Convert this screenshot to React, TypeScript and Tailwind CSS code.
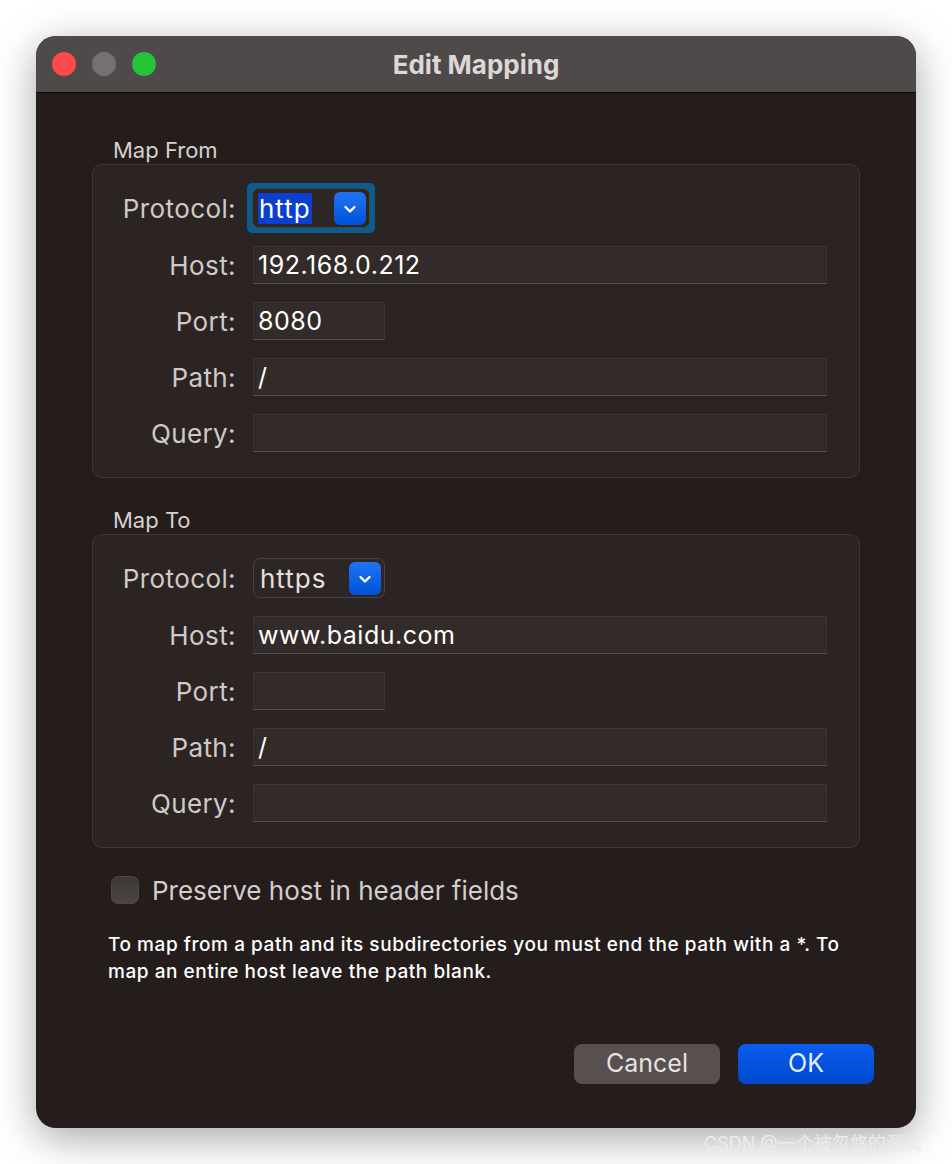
import React from "react";

const font = { fontFamily: "Inter, 'Noto Sans', 'Noto Sans CJK SC', sans-serif" };

function Chevron() {
  return (
    <svg width="16" height="16" viewBox="0 0 16 16" fill="none">
      <path d="M3.5 6L8 10.5 12.5 6" stroke="white" strokeWidth="2.4" strokeLinecap="round" strokeLinejoin="round" />
    </svg>
  );
}

function Select({ value, focused, width }: { value: string; focused?: boolean; width: string }) {
  const box = (
    <div
      className={`relative flex h-[40px] items-center rounded-[7px] border border-[#4a4241] bg-[#2e2625] pl-[5px] ${width}`}
    >
      <span
        className={`px-[1px] text-[26px] leading-[31px] tracking-[1px] ${
          focused ? "bg-[#0a3fcf] text-white" : "text-[#e4e0df]"
        }`}
      >
        {value}
      </span>
      <div className="absolute right-[3px] top-[3px] flex h-[33px] w-[32px] items-center justify-center rounded-[6px] bg-gradient-to-b from-[#1f74f2] to-[#0052d9]">
        <Chevron />
      </div>
    </div>
  );
  if (!focused) return box;
  return <div className="-m-[6px] rounded-[5px] bg-[#0c5c8c] p-[5px]">{box}</div>;
}

function Field({ value, narrow }: { value?: string; narrow?: boolean }) {
  return (
    <div
      className={`flex h-[38px] items-center border-t border-t-[#3d3534] border-b border-b-[#564e4d] border-x border-x-[#3a3231] bg-[#332b2a] px-[4px] pt-[2px] text-[25px] tracking-[0.5px] text-white ${
        narrow ? "w-[132px]" : "w-[574px]"
      }`}
    >
      {value}
    </div>
  );
}

function Row({ label, children, tall }: { label: string; children: React.ReactNode; tall?: boolean }) {
  return (
    <div className={`flex items-center ${tall ? "h-[40px]" : "h-[38px]"}`}>
      <div className="w-[143px] text-right text-[26px] tracking-[0.4px] text-[#cfcac9]">{label}</div>
      <div className="ml-[17px]">{children}</div>
    </div>
  );
}

function Group({
  title,
  proto,
  focused,
  host,
  port,
  path,
}: {
  title: string;
  proto: string;
  focused?: boolean;
  host: string;
  port: string;
  path: string;
}) {
  return (
    <div>
      <div className="ml-[21px] h-[24px] text-[22px] leading-[24px] text-[#d6d1d0]">{title}</div>
      <div className="mt-[2px] flex flex-col gap-[18px] rounded-[10px] border border-[#3e3736] bg-[#2c2423] pb-[25px] pt-[23px]">
        <Row label="Protocol:" tall>
          <Select value={proto} focused={focused} width={focused ? "w-[118px]" : "w-[132px]"} />
        </Row>
        <Row label="Host:">
          <Field value={host} />
        </Row>
        <Row label="Port:">
          <Field value={port} narrow />
        </Row>
        <Row label="Path:">
          <Field value={path} />
        </Row>
        <Row label="Query:">
          <Field />
        </Row>
      </div>
    </div>
  );
}

export default function App() {
  return (
    <div className="relative h-[1164px] w-[952px] overflow-hidden bg-white" style={font}>
      <div className="ml-[36px] mt-[36px] flex h-[1092px] w-[880px] flex-col overflow-hidden rounded-[20px] bg-[#241d1c] shadow-[0_10px_40px_rgba(0,0,0,0.35)]">
        {/* Title bar */}
        <div className="relative flex h-[57px] items-center justify-center border-b border-b-[#0c0909] bg-[#4f4a49]">
          <div className="absolute left-[16px] top-[16px] flex gap-[16px]">
            <span className="h-[24px] w-[24px] rounded-full bg-[#fe4a4a]" />
            <span className="h-[24px] w-[24px] rounded-full bg-[#767170]" />
            <span className="h-[24px] w-[24px] rounded-full bg-[#27c23a]" />
          </div>
          <span className="text-[26px] font-bold text-[#dcd8d7]">Edit Mapping</span>
        </div>

        <div className="flex flex-col px-[56px] pt-[45px]">
          <Group title="Map From" proto="http" focused host="192.168.0.212" port="8080" path="/" />
          <div className="mt-[30px]">
            <Group title="Map To" proto="https" host="www.baidu.com" port="" path="/" />
          </div>

          <div className="ml-[19px] mt-[28px] flex h-[28px] items-center gap-[13px]">
            <span className="h-[28px] w-[28px] rounded-[7px] border border-[#4e4746] bg-gradient-to-b from-[#3e3837] to-[#4a4443]" />
            <span className="text-[26px] text-[#d3cecd]">Preserve host in header fields</span>
          </div>

          <p className="ml-[16px] mt-[27px] whitespace-nowrap text-[19px] font-medium leading-[27px] tracking-[0.55px] text-white">
            To map from a path and its subdirectories you must end the path with a *. To
            <br />
            map an entire host leave the path blank.
          </p>

          <div className="mt-[59px] flex justify-end gap-[18px]">
            <button className="h-[40px] w-[146px] rounded-[8px] bg-[#57504e] text-[25px] text-[#e6e2e1]">Cancel</button>
            <button className="mr-[-14px] h-[40px] w-[136px] rounded-[8px] bg-gradient-to-b from-[#0a5df0] to-[#0049cc] text-[25px] text-[#e8eefc]">
              OK
            </button>
          </div>
        </div>
      </div>
      <div className="absolute left-[704px] top-[1130px] text-[18px] text-[#ececec]">CSDN @一个被忽悠的测试</div>
    </div>
  );
}
